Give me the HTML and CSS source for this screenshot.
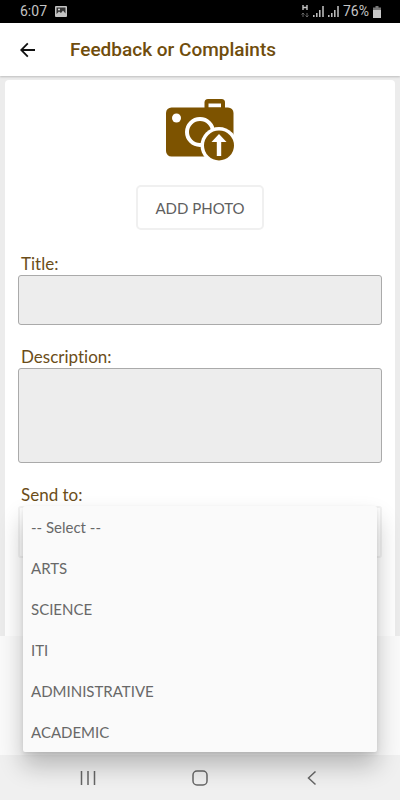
FILE: index.html
```html
<!DOCTYPE html>
<html lang="en">
<head>
<meta charset="utf-8">
<meta name="viewport" content="width=device-width, initial-scale=1">
<title>Feedback or Complaints</title>
<link rel="stylesheet" href="styles.css">
</head>
<body>
<div class="status-bar">
  <span class="status-group">
    <span>6:07</span>
    <svg width="12" height="11" viewBox="0 0 12 11" aria-hidden="true"><rect width="12" height="11" rx="1" fill="#c4c4c4"/><path d="M1.500 1.500h9v6L8 4.500 6 7 4 5.500 1.500 8z" fill="#333"/><circle cx="4" cy="3.500" r="1" fill="#ddd"/></svg>
  </span>
  <span class="status-group status-right">
    <svg width="8" height="13" viewBox="0 0 8 13" aria-hidden="true"><path d="M2 0v5M6 0v5M2 2.500h4" stroke="#c4c4c4" stroke-width="1.400" fill="none"/><path d="M2 12V8M.5 9.500 2 8l1.500 1.500M6 8v4M4.500 10.500 6 12l1.500-1.500" stroke="#666" fill="none"/></svg>
    <svg width="11" height="11" viewBox="0 0 11 11" aria-hidden="true"><path d="M.8 9v2M3.800 7v4M6.800 4v7M10 0v11" stroke="#c4c4c4" stroke-width="1.500"/></svg>
    <svg width="11" height="11" viewBox="0 0 11 11" aria-hidden="true"><path d="M.8 9v2M3.800 7v4M6.800 4v7M10 0v11" stroke="#c4c4c4" stroke-width="1.500"/></svg>
    <span>76%</span>
    <svg width="8" height="12" viewBox="0 0 8 12" aria-hidden="true"><path d="M2.500 0h3v1.500H8V4H0V1.500h2.500z" fill="#777"/><path d="M0 4h8v8H0z" fill="#c8c8c8"/></svg>
  </span>
</div>
<header class="app-bar">
  <button class="back" type="button" aria-label="Back">
    <svg width="16" height="16" viewBox="0 0 16 16" aria-hidden="true"><path d="M15 8H1.500M7.800 1.300 1.200 8l6.600 6.700" fill="none" stroke="#111" stroke-width="1.800"/></svg>
  </button>
  <h1>Feedback or Complaints</h1>
</header>
<main class="page">
  <form class="card">
    <svg class="camera" width="68" height="62" viewBox="0 0 68 62" aria-hidden="true">
      <path d="M38.500 9V3.500Q38.500 0 42 0H55.500Q59 0 59 3.500V9z" fill="#7d5300"/>
      <path d="M42.500 4.500h12.500v4H42.500z" fill="#fff"/>
      <rect y="8.500" width="67.500" height="49" rx="5.500" fill="#7d5300"/>
      <circle cx="10.500" cy="19" r="4.500" fill="#fff"/>
      <circle cx="34" cy="33" r="13" fill="none" stroke="#fff" stroke-width="4"/>
      <circle cx="53" cy="46.500" r="18.500" fill="#fff"/>
      <circle cx="53" cy="46.500" r="15" fill="#7d5300"/>
      <path d="M53 35 60.500 43H55.200V57H50.800V43H45.500z" fill="#fff"/>
    </svg>
    <button class="add-photo" type="button">ADD PHOTO</button>
    <div class="field">
      <label for="title">Title:</label>
      <input id="title" class="box" type="text">
    </div>
    <div class="field">
      <label for="description">Description:</label>
      <textarea id="description" class="box description"></textarea>
    </div>
    <div class="field">
      <label for="send-to">Send to:</label>
      <select id="send-to" class="send-select"></select>
      <div class="menu" role="listbox" aria-label="Send to">
        <button type="button" role="option" aria-selected="true">-- Select --</button>
        <button type="button" role="option">ARTS</button>
        <button type="button" role="option">SCIENCE</button>
        <button type="button" role="option">ITI</button>
        <button type="button" role="option">ADMINISTRATIVE</button>
        <button type="button" role="option">ACADEMIC</button>
      </div>
    </div>
  </form>
</main>
<nav class="nav-bar" aria-label="System">
  <button type="button" aria-label="Recent apps"><svg width="16" height="16" viewBox="0 0 16 16" aria-hidden="true"><path d="M1.500 1v14M8 1v14M14.500 1v14" stroke="#666" stroke-width="1.500"/></svg></button>
  <button type="button" aria-label="Home"><svg width="16" height="16" viewBox="0 0 16 16" aria-hidden="true"><rect x="1" y="1" width="14" height="14" rx="4" fill="none" stroke="#666" stroke-width="1.500"/></svg></button>
  <button type="button" aria-label="Back"><svg width="16" height="16" viewBox="0 0 16 16" aria-hidden="true"><path d="M11.500 1.500 4.500 8l7 6.500" fill="none" stroke="#666" stroke-width="1.500"/></svg></button>
</nav>
</body>
</html>
```
FILE: styles.css
```css
* {
  box-sizing: border-box;
}

body {
  margin: 0;
  min-height: 100vh;
  display: flex;
  flex-direction: column;
  background: #fafafa;
  font-family: Lato, "Liberation Sans", sans-serif;
  font-variant-ligatures: none;
}

button {
  margin: 0;
  padding: 0;
  border: 0;
  background: none;
  font: inherit;
}

svg {
  display: block;
}

.status-bar {
  display: flex;
  justify-content: space-between;
  align-items: center;
  height: 23px;
  padding: 0 19px 0 20px;
  background: #000;
  color: #c4c4c4;
  font: 14px/23px Roboto, sans-serif;
}

.status-group {
  display: flex;
  align-items: center;
  gap: 8px;
}

.status-right {
  gap: 4px;
}

.app-bar {
  position: relative;
  display: flex;
  align-items: center;
  height: 53px;
  padding: 0 20px;
  gap: 34px;
  background: #fff;
  box-shadow: 0 1px 2px rgba(0, 0, 0, 0.2);
}

.app-bar h1 {
  margin: 0;
  color: #704d0c;
  font: 500 19px/24px Roboto, sans-serif;
}

.page {
  padding: 4px 5px 0;
  background: #ececec;
}

.card {
  display: flex;
  flex-direction: column;
  align-items: center;
  padding: 19px 13px 78px;
  border-radius: 4px 4px 0 0;
  background: #fff;
}

.add-photo {
  margin: 24px 0 2px;
  padding: 0 17px;
  height: 45px;
  border: 2px solid #f0f0f0;
  border-radius: 5px;
  color: #606060;
  font-size: 15px;
}

.field {
  position: relative;
  align-self: stretch;
  margin-top: 21px;
}

.field label {
  display: block;
  padding-left: 3px;
  color: #6b4d18;
  font-size: 17px;
  line-height: 22px;
}

.box {
  display: block;
  width: 100%;
  height: 50px;
  padding: 8px;
  border: 1px solid #aaa;
  border-radius: 3px;
  background: #ededed;
  font: inherit;
}

.description {
  height: 95px;
  resize: none;
}

.send-select {
  display: block;
  width: 100%;
  height: 52px;
  border: 2px solid #f2f2f2;
  border-radius: 3px;
  background: #fff;
  appearance: none;
}

.menu {
  position: absolute;
  z-index: 1;
  top: 22px;
  left: 5px;
  right: 5px;
  display: flex;
  flex-direction: column;
  border-radius: 2px;
  background: #fafafa;
  box-shadow: 0 14px 24px rgba(0, 0, 0, 0.24), 0 2px 4px rgba(0, 0, 0, 0.1);
}

.menu button {
  height: 41px;
  padding: 0 8px;
  color: #686868;
  font-size: 15px;
  text-align: left;
}

.nav-bar {
  display: flex;
  justify-content: center;
  gap: 96px;
  margin-top: auto;
  height: 45px;
  background: #f0f0f0;
}

.nav-bar button {
  display: flex;
  align-items: center;
}
```
